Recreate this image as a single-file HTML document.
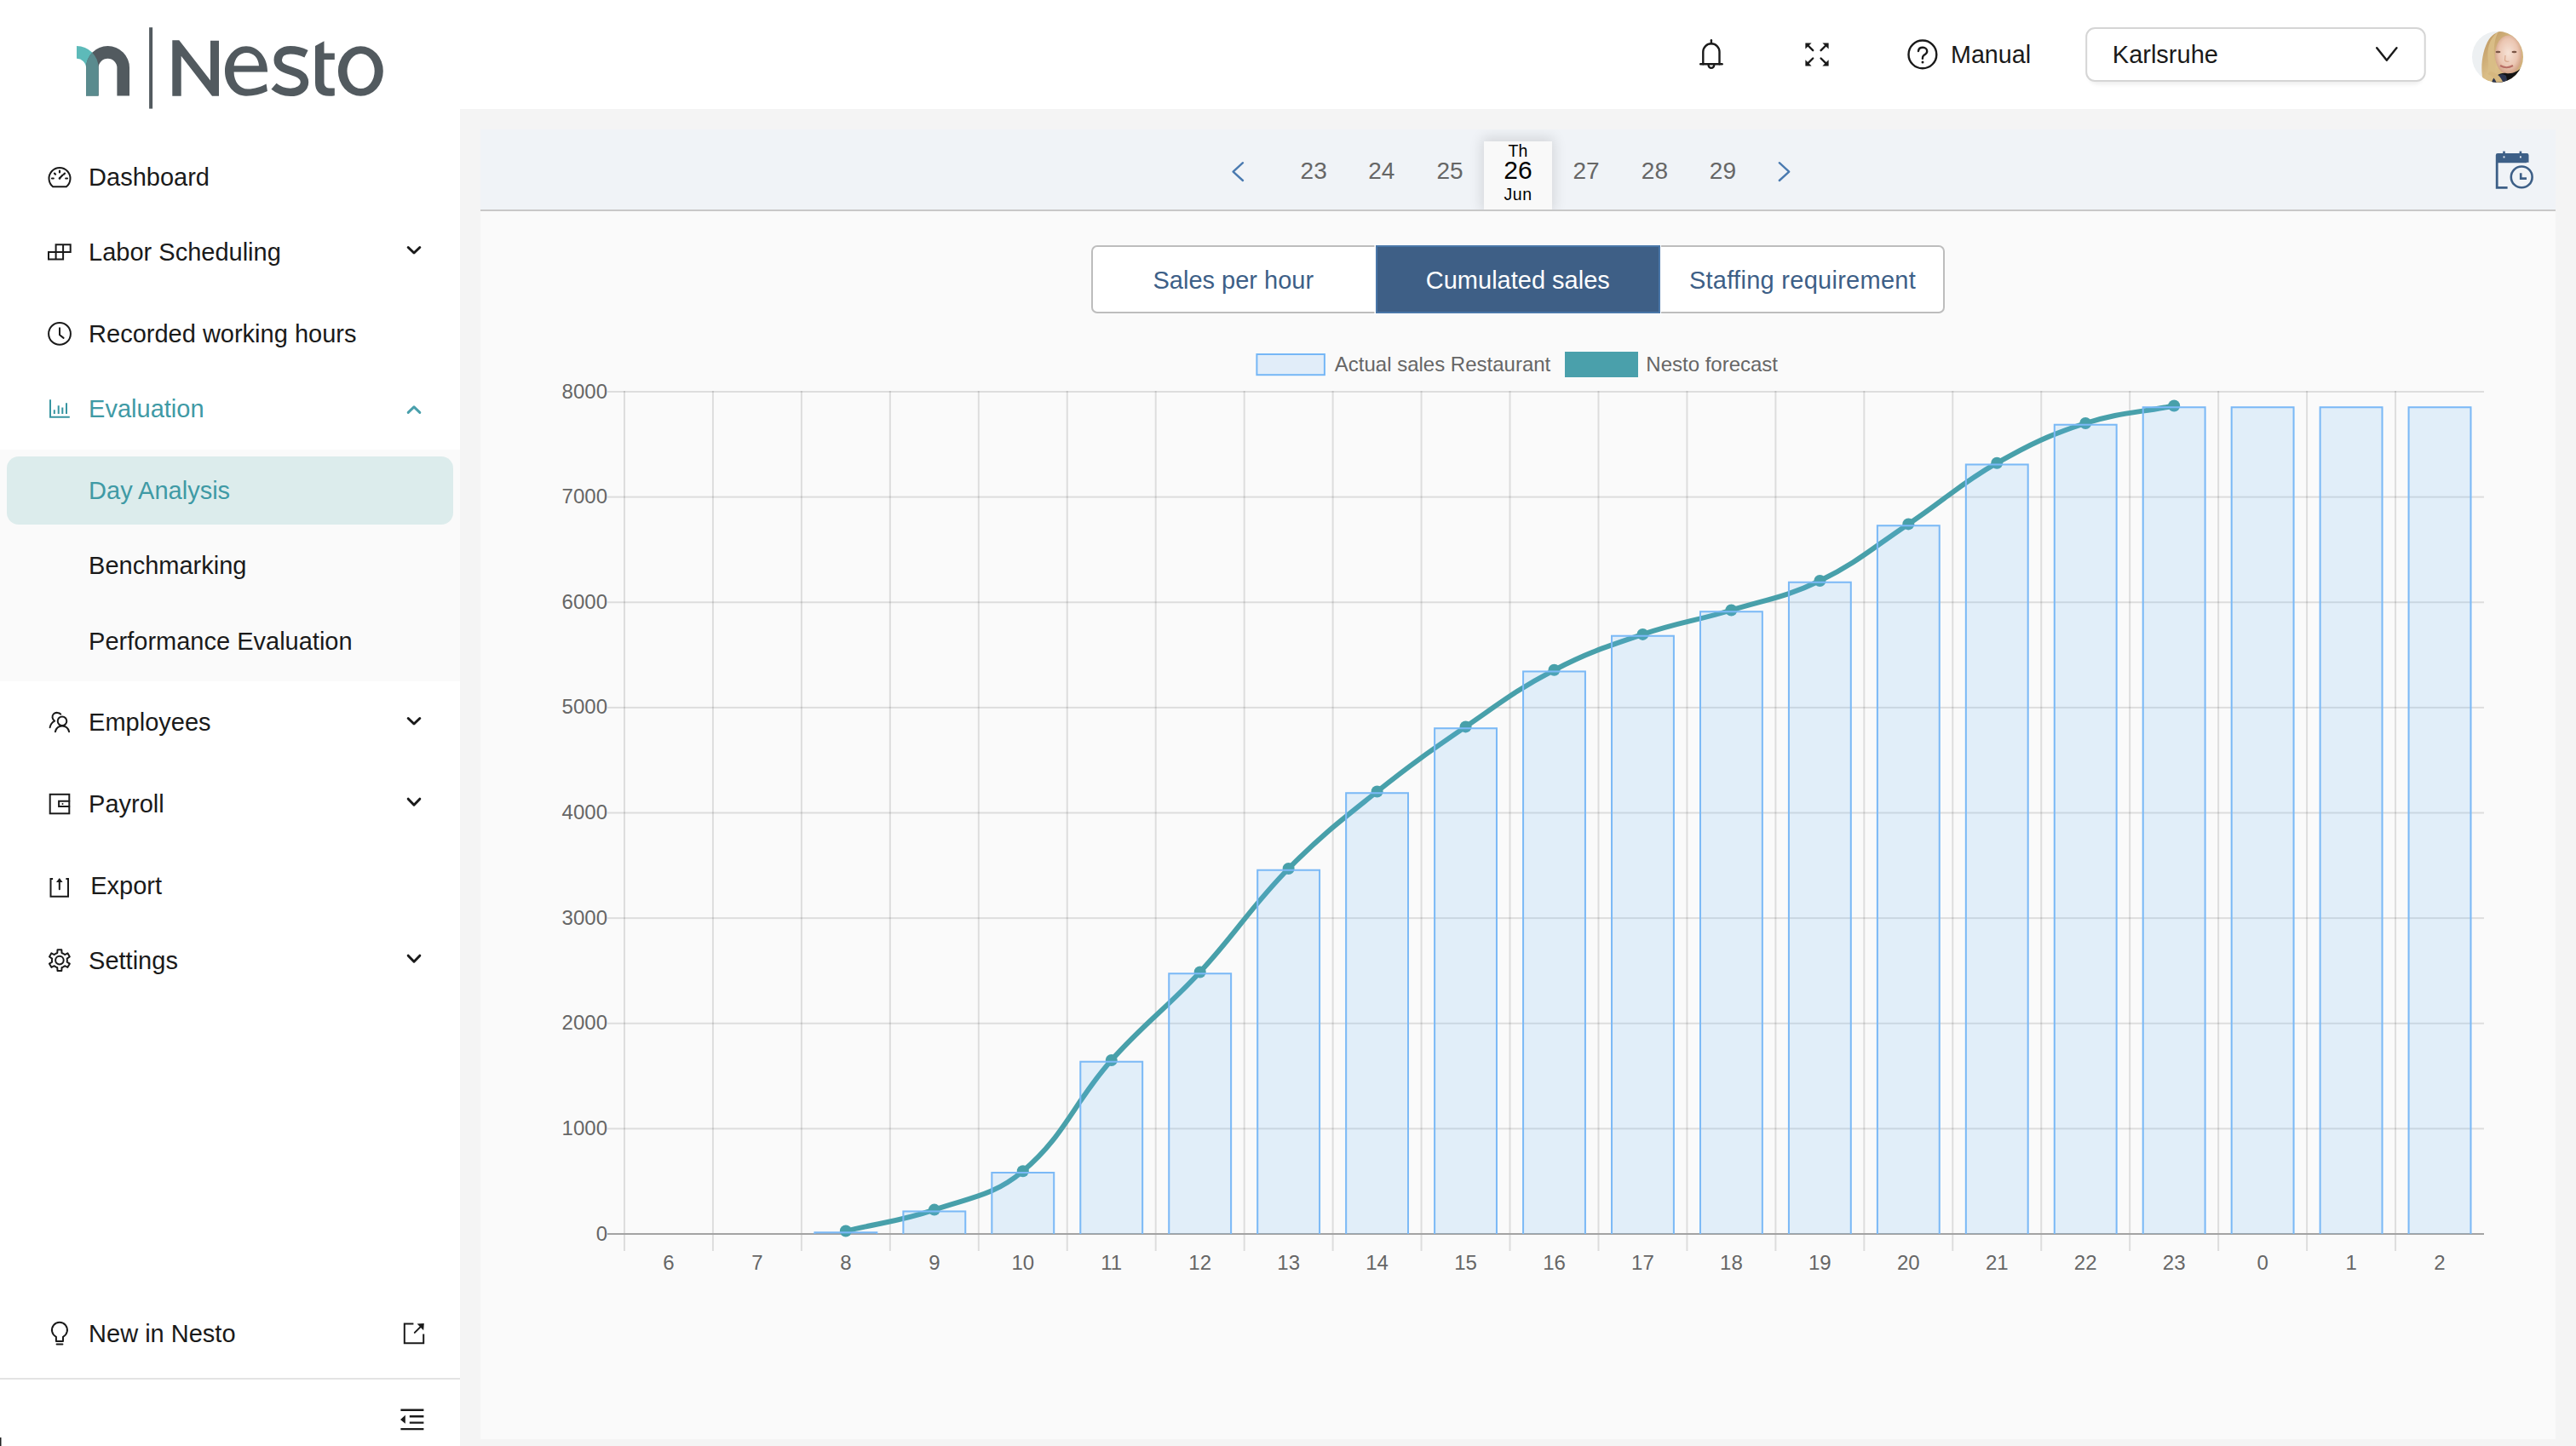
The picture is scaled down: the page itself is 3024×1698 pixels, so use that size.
<!DOCTYPE html>
<html><head><meta charset="utf-8"><title>Nesto - Day Analysis</title>
<style>html,body{margin:0;padding:0;background:#fff;overflow:hidden;width:3024px;height:1698px}
svg{display:block;font-family:"Liberation Sans", sans-serif}</style></head>
<body><svg width="3024" height="1698" viewBox="0 0 3024 1698">
<rect width="3024" height="1698" fill="#ffffff"/>
<rect x="540" y="128" width="2484" height="1570" fill="#f4f4f4"/>
<rect x="564" y="152" width="2436" height="1538" fill="#fafafa"/>
<defs><clipPath id="tealclip"><path d="M90,54 A25.6,25.6 0 0 1 115.6,79.6 L115.6,112.6 L101,112.6 L101,79.6 A10.8,10.8 0 0 0 90,68.8 Z"/></clipPath></defs>
<path d="M90,54 A25.6,25.6 0 0 1 115.6,79.6 L115.6,112.6 L101,112.6 L101,79.6 A10.8,10.8 0 0 0 90,68.8 Z" fill="#5dbab9"/>
<path d="M101,112.6 L101,79.6 A25.5,25.5 0 0 1 152,79.6 L152,112.6 L137.4,112.6 L137.4,79.6 A10.9,10.9 0 0 0 115.6,79.6 L115.6,112.6 Z" fill="#525a5f"/>
<path d="M101,112.6 L101,79.6 A25.5,25.5 0 0 1 152,79.6 L152,112.6 L137.4,112.6 L137.4,79.6 A10.9,10.9 0 0 0 115.6,79.6 L115.6,112.6 Z" fill="#5a8b8e" clip-path="url(#tealclip)"/>
<rect x="175.1" y="32.2" width="4" height="95.4" fill="#525a5f"/>
<path fill="#525a5f" d="M202.3,112.7 L202.3,47.3 L210.3,47.3 L247,94.6 L247,47.7 L257,47.7 L257,112.7 L249,112.7 L212.7,65.8 L212.7,112.7 Z"/>
<path fill="#525a5f" fill-rule="evenodd" d="M313.9,107.1 C306,111 298,112.7 289,112.7 C275.2,112.7 264,99.6 264,83.5 C264,67.4 275.2,54.3 289,54.3 C302.8,54.3 314,67.4 314,83.5 L314,84.4 L274.6,84.4 C274.6,96 281.5,104.5 291,104.5 C299,104.5 306,102 312.6,98.5 Z M274.7,77.3 C275.5,68.5 281,62 289.5,62 C298,62 303.5,68.5 304,77.3 Z"/>
<path fill="none" stroke="#525a5f" stroke-width="9.4" d="M359.5,63.2 C353,60 347,58.7 341,58.7 C332,58.7 326.2,63.5 326.2,70.5 C326.2,78 333,80.5 341,83 C350,85.8 357.5,88.5 357.5,96.5 C357.5,104 350,108.4 341,108.4 C334,108.4 327,106 321.5,101.3"/>
<path fill="#525a5f" d="M370,54.1 L380.5,48.3 L380.5,62.4 L392.8,62.4 L392.8,70 L380.5,70 L380.5,96 C380.5,101.5 383,103.6 388,103.6 L392.8,103.6 L392.8,112.2 C391,112.6 389,112.7 386.5,112.7 C375,112.7 370,107 370,97 Z"/>
<path fill="#525a5f" fill-rule="evenodd" d="M396.9,83.5 A26.45,29.2 0 1 1 449.8,83.5 A26.45,29.2 0 1 1 396.9,83.5 Z M407.5,83.5 A16.1,20.5 0 1 0 439.7,83.5 A16.1,20.5 0 1 0 407.5,83.5 Z"/>
<rect x="0" y="528" width="540" height="272" fill="#fafafa"/>
<rect x="8" y="536" width="524" height="80" rx="14" fill="#dcecec"/>
<rect x="0" y="1618" width="540" height="2" fill="#e3e3e3"/>
<text x="104.1" y="218" font-size="29" fill="#1a1a1a" text-anchor="start" font-weight="normal">Dashboard</text>
<text x="104.1" y="306" font-size="29" fill="#1a1a1a" text-anchor="start" font-weight="normal">Labor Scheduling</text>
<text x="104.1" y="402" font-size="29" fill="#1a1a1a" text-anchor="start" font-weight="normal">Recorded working hours</text>
<text x="104.1" y="490" font-size="29" fill="#3f9aa5" text-anchor="start" font-weight="normal">Evaluation</text>
<text x="104.1" y="586" font-size="29" fill="#3f9aa5" text-anchor="start" font-weight="normal">Day Analysis</text>
<text x="104.1" y="674" font-size="29" fill="#1a1a1a" text-anchor="start" font-weight="normal">Benchmarking</text>
<text x="104.1" y="763" font-size="29" fill="#1a1a1a" text-anchor="start" font-weight="normal">Performance Evaluation</text>
<text x="104.1" y="858" font-size="29" fill="#1a1a1a" text-anchor="start" font-weight="normal">Employees</text>
<text x="104.1" y="954" font-size="29" fill="#1a1a1a" text-anchor="start" font-weight="normal">Payroll</text>
<text x="106.2" y="1050" font-size="29" fill="#1a1a1a" text-anchor="start" font-weight="normal">Export</text>
<text x="104.1" y="1138" font-size="29" fill="#1a1a1a" text-anchor="start" font-weight="normal">Settings</text>
<text x="104.1" y="1576" font-size="29" fill="#1a1a1a" text-anchor="start" font-weight="normal">New in Nesto</text>
<path d="M479.2,290.5 L486,297 L492.8,290.5" fill="none" stroke="#1a1a1a" stroke-width="3" stroke-linecap="round" stroke-linejoin="round"/>
<path d="M479.2,843.5 L486,850 L492.8,843.5" fill="none" stroke="#1a1a1a" stroke-width="3" stroke-linecap="round" stroke-linejoin="round"/>
<path d="M479.2,938.2 L486,945.2 L492.8,938.2" fill="none" stroke="#1a1a1a" stroke-width="3" stroke-linecap="round" stroke-linejoin="round"/>
<path d="M479.2,1122.2 L486,1129.2 L492.8,1122.2" fill="none" stroke="#1a1a1a" stroke-width="3" stroke-linecap="round" stroke-linejoin="round"/>
<path d="M479.2,484.4 L486,477.8 L492.8,484.4" fill="none" stroke="#4aa0ac" stroke-width="3" stroke-linecap="round" stroke-linejoin="round"/>
<g fill="none" stroke="#1a1a1a" stroke-width="2" stroke-linecap="round" stroke-linejoin="round">
<path d="M62.1,219.2 A12.5,12.5 0 1 1 77.9,219.2 Z"/>
<path d="M70,200.6 V202.4 M64,203.6 L65.1,204.7 M76,203.6 L74.9,204.7 M61,209.5 H62.8 M79,209.5 H77.2 M70,209.3 L73.6,205.6" stroke-width="2.2"/>
<circle cx="70" cy="209.5" r="1.3" fill="#1a1a1a" stroke="none"/>
<path d="M65.6,295.9 V287.3 H82.7 V295.9 H57 V304.4 H74.1 V287.3 M65.6,295.9 V304.4" stroke-linecap="square" stroke-linejoin="miter"/>
<circle cx="70" cy="391.9" r="12.9"/>
<path d="M70,385.3 V393.3 L74.6,396.9"/>
</g>
<path d="M59,469.2 V489.8 H81.8" fill="none" stroke="#3795a1" stroke-width="2" stroke-linecap="butt" stroke-linejoin="miter"/><path d="M63.8,481.2 V485.9 M68.7,476.2 V485.9 M73.3,478.4 V485.9 M78,473.3 V485.9" fill="none" stroke="#3795a1" stroke-width="2" stroke-linecap="butt"/>
<g fill="none" stroke="#1a1a1a" stroke-width="2" stroke-linecap="round" stroke-linejoin="round">
<circle cx="73" cy="846.8" r="5.3"/>
<path d="M64.9,859.2 C65.8,855.2 69,852.4 73,852.4 C77,852.4 80.2,855.2 81.1,859.2"/>
<path d="M71.2,838.6 C69.6,836.6 65.2,836.1 62.9,838.4 C60.6,840.8 61.2,844.8 64.1,846.6 C61.2,848.1 59.2,850.8 58.6,854.2"/>
<rect x="58.7" y="932.8" width="22.6" height="22.5" stroke-linejoin="miter"/>
<path d="M81.3,940.8 H69.1 V946.9 H81.3" stroke-linejoin="miter"/>
<circle cx="73.5" cy="944" r="1" fill="#1a1a1a" stroke="none"/>
<path d="M62.1,1032 H59.5 V1052.8 H80 V1032 H77.4" stroke-linejoin="miter" stroke-linecap="butt"/>
<path d="M69.8,1044.2 V1034.5"/>
<path d="M69.8,1031 L66,1036 H73.6 Z" fill="#1a1a1a" stroke="none"/>
</g>
<path d="M65.40,1119.81 L67.27,1118.99 L67.50,1115.23 L72.30,1115.23 L72.53,1118.99 L74.40,1119.81 L76.04,1121.02 L79.41,1119.33 L81.81,1123.50 L78.67,1125.58 L78.90,1127.60 L78.67,1129.62 L81.81,1131.70 L79.41,1135.87 L76.04,1134.18 L74.40,1135.39 L72.53,1136.21 L72.30,1139.97 L67.50,1139.97 L67.27,1136.21 L65.40,1135.39 L63.76,1134.18 L60.39,1135.87 L57.99,1131.70 L61.13,1129.62 L60.90,1127.60 L61.13,1125.58 L57.99,1123.50 L60.39,1119.33 L63.76,1121.02 Z" fill="none" stroke="#1a1a1a" stroke-width="2" stroke-linejoin="round"/>
<circle cx="69.9" cy="1127.6" r="4.8" fill="none" stroke="#1a1a1a" stroke-width="2"/>
<g fill="none" stroke="#1a1a1a" stroke-width="2" stroke-linecap="round" stroke-linejoin="round">
<path d="M65.9,1569.8 A9,9 0 1 1 74,1569.8 V1574.9 H65.9 Z"/>
<path d="M66.6,1578.6 H73.4"/>
<path d="M485.4,1554.6 H474.8 V1577.2 H497.2 V1566.6" stroke-linejoin="miter" stroke-linecap="butt"/>
<path d="M486.8,1564.9 L494.6,1557.1"/>
<path d="M497.8,1554 L489.6,1554.6 L497.2,1562.2 Z" fill="#1a1a1a" stroke="none"/>
<path d="M470.4,1655.7 H497.4 M480.8,1663.2 H497.4 M480.8,1670.6 H497.4 M470.4,1678.1 H497.4" stroke-width="2.4" stroke-linecap="butt"/>
<path d="M475.8,1661.8 L470,1666.9 L475.8,1671.8 Z" fill="#1a1a1a" stroke="none"/>
</g>
<g fill="none" stroke="#1a1a1a" stroke-width="2.4" stroke-linecap="round" stroke-linejoin="round">
<path d="M1999.3,75.3 V60.8 A9.6,9.6 0 0 1 2018.5,60.8 V75.3"/>
<path d="M1996.2,75.3 H2021.6"/>
<path d="M2008.9,47.2 V51"/>
<path d="M2005.6,76.6 A3.3,3.3 0 0 0 2012.2,76.6"/>
<path d="M2128.2,59.2 L2122,53 M2137.6,59.2 L2143.8,53 M2128.2,68.5 L2122,74.7 M2137.6,68.5 L2143.8,74.7"/>
</g>
<g fill="#1a1a1a">
<path d="M2119.4,50.4 L2126.6,50.4 L2119.4,57.6 Z"/>
<path d="M2146.6,50.4 L2139.4,50.4 L2146.6,57.6 Z"/>
<path d="M2119.4,77.5 L2119.4,70.3 L2126.6,77.5 Z"/>
<path d="M2146.6,77.5 L2146.6,70.3 L2139.4,77.5 Z"/>
</g>
<g fill="none" stroke="#1a1a1a" stroke-width="2.4" stroke-linecap="round" stroke-linejoin="round">
<circle cx="2256.9" cy="63.9" r="16.4"/>
<path d="M2252,60 C2252.2,57.4 2254.5,55.8 2257.3,55.8 C2260.1,55.8 2262.2,57.7 2262.2,60.2 C2262.2,62.9 2259.7,64 2258.2,65.1 C2257.1,66 2256.9,67 2256.9,68.8"/>
</g>
<circle cx="2257" cy="72.9" r="1.5" fill="#1a1a1a"/>
<text x="2290" y="74" font-size="28.7" fill="#1a1a1a" text-anchor="start" font-weight="normal">Manual</text>
<defs><filter id="selsh" x="-5%" y="-30%" width="110%" height="160%"><feGaussianBlur stdDeviation="2.5"/></filter></defs><rect x="2452" y="37" width="392" height="62" rx="10" fill="#000" opacity="0.07" filter="url(#selsh)"/>
<rect x="2449.2" y="33.1" width="397.5" height="61.8" rx="10" fill="#fff" stroke="#d5d5d5" stroke-width="2"/>
<text x="2479.8" y="74" font-size="29" fill="#1a1a1a" text-anchor="start" font-weight="normal">Karlsruhe</text>
<path d="M2790.2,56.2 L2801.8,70.8 L2813.4,56.2" fill="none" stroke="#1a1a1a" stroke-width="2.4" stroke-linecap="round" stroke-linejoin="round"/>
<defs><clipPath id="av"><circle cx="2932" cy="66.8" r="30"/></clipPath>
<radialGradient id="face" cx="0.5" cy="0.45" r="0.55"><stop offset="0" stop-color="#f6e2d6"/><stop offset="0.65" stop-color="#ebc6b2"/><stop offset="1" stop-color="#cf9f82"/></radialGradient>
<linearGradient id="hair" x1="0" y1="0" x2="1" y2="1"><stop offset="0" stop-color="#b8905a"/><stop offset="0.5" stop-color="#dcc08a"/><stop offset="1" stop-color="#c9a46e"/></linearGradient></defs>
<g clip-path="url(#av)">
<rect x="2900" y="35" width="64" height="64" fill="#edf0f2"/>
<path d="M2916,99 C2911,84 2913,60 2922,46 C2931,33 2950,33 2960,44 C2967,54 2965,76 2963,99 Z" fill="url(#hair)"/>
<path d="M2950,99 C2956,92 2962,82 2964,70 L2964,99 Z" fill="#121212"/>
<ellipse cx="2944.5" cy="64.5" rx="15.5" ry="23" fill="url(#face)"/>
<path d="M2924,99 C2927,90 2934,85 2942,86 C2950,87 2955,84 2962,78 L2964,99 Z" fill="#141414"/>
<path d="M2927,92 C2932,87 2938,86 2942,89 L2944,99 L2925,99 Z" fill="#2d3650"/>
<path d="M2933,37 C2927,48 2927,62 2929,75 C2931,84 2927,92 2921,99 L2915,99 C2920,90 2922,82 2921,72 C2919,58 2922,45 2933,37 Z" fill="#d9bd86"/>
<path d="M2923,84 C2931,85 2937,91 2939,99 L2931,99 C2930,93 2926,89 2920,87 Z" fill="#d6b77f"/>
<ellipse cx="2932.5" cy="61" rx="3" ry="1.3" fill="#7a5646"/><ellipse cx="2951.5" cy="61" rx="3" ry="1.3" fill="#7a5646"/>
<path d="M2935,77 Q2942.5,81.5 2950,77" stroke="#b86f66" stroke-width="2.2" fill="none"/>
<path d="M2941,65 L2940.5,71 Q2942.5,73 2945.5,72" stroke="#d9a88e" stroke-width="1.2" fill="none"/>
</g>
<rect x="564" y="152" width="2436" height="94" fill="#f0f3f7"/>
<rect x="564" y="246" width="2436" height="2" fill="#c8c8c8"/>
<defs><filter id="sh" x="-30%" y="-30%" width="160%" height="160%"><feGaussianBlur stdDeviation="8"/></filter><clipPath id="dbclip"><rect x="564" y="152" width="2436" height="94"/></clipPath></defs>
<rect x="1740" y="162" width="84" height="86" fill="#000" opacity="0.12" filter="url(#sh)" clip-path="url(#dbclip)"/>
<rect x="1742" y="166" width="80" height="80" fill="#f9f9f9"/>
<rect x="1736" y="246" width="92" height="2" fill="#c8c8c8"/>
<text x="1782" y="183.6" font-size="19.5" fill="#000" text-anchor="middle" font-weight="normal">Th</text>
<text x="1782" y="210.4" font-size="30" fill="#000" text-anchor="middle" font-weight="normal">26</text>
<text x="1782" y="234.8" font-size="19.5" fill="#000" text-anchor="middle" font-weight="normal" letter-spacing="0.6">Jun</text>
<text x="1542.2" y="210" font-size="28" fill="#666" text-anchor="middle" font-weight="normal">23</text>
<text x="1621.8" y="210" font-size="28" fill="#666" text-anchor="middle" font-weight="normal">24</text>
<text x="1702" y="210" font-size="28" fill="#666" text-anchor="middle" font-weight="normal">25</text>
<text x="1862" y="210" font-size="28" fill="#666" text-anchor="middle" font-weight="normal">27</text>
<text x="1942.4" y="210" font-size="28" fill="#666" text-anchor="middle" font-weight="normal">28</text>
<text x="2022.4" y="210" font-size="28" fill="#666" text-anchor="middle" font-weight="normal">29</text>
<path d="M1459,191.2 L1447.6,201.6 L1459,212" fill="none" stroke="#4a7ab0" stroke-width="2.4" stroke-linecap="round" stroke-linejoin="round"/>
<path d="M2088.8,191.2 L2100.2,201.6 L2088.8,212" fill="none" stroke="#4a7ab0" stroke-width="2.4" stroke-linecap="round" stroke-linejoin="round"/>
<g fill="#3d5f87">
<path d="M2929.8,221.7 V182.2 Q2929.8,180 2932,180 H2966.3 Q2968.5,180 2968.5,182.2 V190.8 H2966 V191.3 H2932.6 V218.9 H2943.6 V221.7 Z"/>
<rect x="2938.2" y="177.6" width="2.6" height="8"/><rect x="2957.6" y="177.6" width="2.6" height="8"/>
</g>
<rect x="2938.6" y="183.4" width="1.8" height="2" fill="#f0f3f7"/><rect x="2958" y="183.4" width="1.8" height="2" fill="#f0f3f7"/>
<circle cx="2960.2" cy="207.9" r="12.4" fill="#f0f3f7" stroke="#3d5f87" stroke-width="2.6"/>
<path d="M2959.2,203.2 V209.6 H2966" fill="none" stroke="#3d5f87" stroke-width="2.6"/>
<rect x="1282" y="289" width="1000" height="78" rx="6" fill="#fff" stroke="#bdbdbd" stroke-width="2"/>
<rect x="1613.5" y="287" width="336.5" height="82" fill="#fff"/><rect x="1615" y="288" width="334" height="80" fill="#3e5f86"/><rect x="1616" y="289" width="332" height="78" fill="none" stroke="#4a77a8" stroke-width="2"/>
<text x="1447.8" y="338.6" font-size="29" fill="#3d5f87" text-anchor="middle" font-weight="normal">Sales per hour</text>
<text x="1781.8" y="338.6" font-size="29" fill="#ffffff" text-anchor="middle" font-weight="normal">Cumulated sales</text>
<text x="2116" y="338.6" font-size="29" fill="#3d5f87" text-anchor="middle" font-weight="normal" letter-spacing="0.28">Staffing requirement</text>
<rect x="1475.4" y="416" width="79.5" height="24.2" fill="#e1edf9" stroke="#76b7f6" stroke-width="2"/>
<text x="1566.8" y="436" font-size="24" fill="#666" text-anchor="start" font-weight="normal">Actual sales Restaurant</text>
<rect x="1837" y="413" width="86" height="30" fill="#4aa0ab"/>
<text x="1932.3" y="436" font-size="24" fill="#666" text-anchor="start" font-weight="normal">Nesto forecast</text>
<rect x="713" y="1448.00" width="2203.00" height="2" fill="#a3a3a3"/>
<text x="713" y="1456.6" font-size="24" fill="#666" text-anchor="end" font-weight="normal">0</text>
<rect x="713" y="1324.38" width="2203.00" height="2" fill="rgba(0,0,0,0.115)"/>
<text x="713" y="1332.97" font-size="24" fill="#666" text-anchor="end" font-weight="normal">1000</text>
<rect x="713" y="1200.75" width="2203.00" height="2" fill="rgba(0,0,0,0.115)"/>
<text x="713" y="1209.35" font-size="24" fill="#666" text-anchor="end" font-weight="normal">2000</text>
<rect x="713" y="1077.12" width="2203.00" height="2" fill="rgba(0,0,0,0.115)"/>
<text x="713" y="1085.72" font-size="24" fill="#666" text-anchor="end" font-weight="normal">3000</text>
<rect x="713" y="953.50" width="2203.00" height="2" fill="rgba(0,0,0,0.115)"/>
<text x="713" y="962.1" font-size="24" fill="#666" text-anchor="end" font-weight="normal">4000</text>
<rect x="713" y="829.88" width="2203.00" height="2" fill="rgba(0,0,0,0.115)"/>
<text x="713" y="838.48" font-size="24" fill="#666" text-anchor="end" font-weight="normal">5000</text>
<rect x="713" y="706.25" width="2203.00" height="2" fill="rgba(0,0,0,0.115)"/>
<text x="713" y="714.85" font-size="24" fill="#666" text-anchor="end" font-weight="normal">6000</text>
<rect x="713" y="582.62" width="2203.00" height="2" fill="rgba(0,0,0,0.115)"/>
<text x="713" y="591.23" font-size="24" fill="#666" text-anchor="end" font-weight="normal">7000</text>
<rect x="713" y="459.00" width="2203.00" height="2" fill="rgba(0,0,0,0.115)"/>
<text x="713" y="467.6" font-size="24" fill="#666" text-anchor="end" font-weight="normal">8000</text>
<rect x="732.00" y="459.0" width="2" height="1010.0" fill="rgba(0,0,0,0.115)"/>
<rect x="835.95" y="459.0" width="2" height="1010.0" fill="rgba(0,0,0,0.115)"/>
<rect x="939.90" y="459.0" width="2" height="1010.0" fill="rgba(0,0,0,0.115)"/>
<rect x="1043.86" y="459.0" width="2" height="1010.0" fill="rgba(0,0,0,0.115)"/>
<rect x="1147.81" y="459.0" width="2" height="1010.0" fill="rgba(0,0,0,0.115)"/>
<rect x="1251.76" y="459.0" width="2" height="1010.0" fill="rgba(0,0,0,0.115)"/>
<rect x="1355.71" y="459.0" width="2" height="1010.0" fill="rgba(0,0,0,0.115)"/>
<rect x="1459.67" y="459.0" width="2" height="1010.0" fill="rgba(0,0,0,0.115)"/>
<rect x="1563.62" y="459.0" width="2" height="1010.0" fill="rgba(0,0,0,0.115)"/>
<rect x="1667.57" y="459.0" width="2" height="1010.0" fill="rgba(0,0,0,0.115)"/>
<rect x="1771.52" y="459.0" width="2" height="1010.0" fill="rgba(0,0,0,0.115)"/>
<rect x="1875.48" y="459.0" width="2" height="1010.0" fill="rgba(0,0,0,0.115)"/>
<rect x="1979.43" y="459.0" width="2" height="1010.0" fill="rgba(0,0,0,0.115)"/>
<rect x="2083.38" y="459.0" width="2" height="1010.0" fill="rgba(0,0,0,0.115)"/>
<rect x="2187.33" y="459.0" width="2" height="1010.0" fill="rgba(0,0,0,0.115)"/>
<rect x="2291.29" y="459.0" width="2" height="1010.0" fill="rgba(0,0,0,0.115)"/>
<rect x="2395.24" y="459.0" width="2" height="1010.0" fill="rgba(0,0,0,0.115)"/>
<rect x="2499.19" y="459.0" width="2" height="1010.0" fill="rgba(0,0,0,0.115)"/>
<rect x="2603.14" y="459.0" width="2" height="1010.0" fill="rgba(0,0,0,0.115)"/>
<rect x="2707.10" y="459.0" width="2" height="1010.0" fill="rgba(0,0,0,0.115)"/>
<rect x="2811.05" y="459.0" width="2" height="1010.0" fill="rgba(0,0,0,0.115)"/>
<rect x="713" y="1448.0" width="2203.0" height="2" fill="#a3a3a3"/>
<text x="784.98" y="1491" font-size="24" fill="#666" text-anchor="middle" font-weight="normal">6</text>
<text x="888.93" y="1491" font-size="24" fill="#666" text-anchor="middle" font-weight="normal">7</text>
<text x="992.88" y="1491" font-size="24" fill="#666" text-anchor="middle" font-weight="normal">8</text>
<text x="1096.83" y="1491" font-size="24" fill="#666" text-anchor="middle" font-weight="normal">9</text>
<text x="1200.79" y="1491" font-size="24" fill="#666" text-anchor="middle" font-weight="normal">10</text>
<text x="1304.74" y="1491" font-size="24" fill="#666" text-anchor="middle" font-weight="normal">11</text>
<text x="1408.69" y="1491" font-size="24" fill="#666" text-anchor="middle" font-weight="normal">12</text>
<text x="1512.64" y="1491" font-size="24" fill="#666" text-anchor="middle" font-weight="normal">13</text>
<text x="1616.6" y="1491" font-size="24" fill="#666" text-anchor="middle" font-weight="normal">14</text>
<text x="1720.55" y="1491" font-size="24" fill="#666" text-anchor="middle" font-weight="normal">15</text>
<text x="1824.5" y="1491" font-size="24" fill="#666" text-anchor="middle" font-weight="normal">16</text>
<text x="1928.45" y="1491" font-size="24" fill="#666" text-anchor="middle" font-weight="normal">17</text>
<text x="2032.4" y="1491" font-size="24" fill="#666" text-anchor="middle" font-weight="normal">18</text>
<text x="2136.36" y="1491" font-size="24" fill="#666" text-anchor="middle" font-weight="normal">19</text>
<text x="2240.31" y="1491" font-size="24" fill="#666" text-anchor="middle" font-weight="normal">20</text>
<text x="2344.26" y="1491" font-size="24" fill="#666" text-anchor="middle" font-weight="normal">21</text>
<text x="2448.21" y="1491" font-size="24" fill="#666" text-anchor="middle" font-weight="normal">22</text>
<text x="2552.17" y="1491" font-size="24" fill="#666" text-anchor="middle" font-weight="normal">23</text>
<text x="2656.12" y="1491" font-size="24" fill="#666" text-anchor="middle" font-weight="normal">0</text>
<text x="2760.07" y="1491" font-size="24" fill="#666" text-anchor="middle" font-weight="normal">1</text>
<text x="2864.02" y="1491" font-size="24" fill="#666" text-anchor="middle" font-weight="normal">2</text>
<path d="M992.88,1445.50 C1034.46,1435.54 1056.49,1434.24 1096.83,1420.60 C1139.65,1406.12 1167.10,1403.65 1200.79,1375.20 C1250.26,1333.41 1260.51,1294.71 1304.74,1245.00 C1343.68,1201.23 1368.90,1184.56 1408.69,1141.50 C1452.06,1094.56 1467.98,1065.54 1512.64,1020.00 C1551.14,980.74 1573.61,963.94 1616.60,929.50 C1656.77,897.30 1678.08,882.55 1720.55,853.40 C1761.24,825.47 1780.91,809.55 1824.50,786.80 C1864.07,766.15 1886.05,759.24 1928.45,744.90 C1969.22,731.12 1991.16,728.98 2032.40,716.50 C2074.32,703.82 2097.26,701.01 2136.36,682.00 C2180.42,660.57 2199.20,642.75 2240.31,615.40 C2282.36,587.43 2300.55,568.59 2344.26,543.70 C2383.71,521.23 2405.12,510.93 2448.21,497.00 C2488.28,484.05 2510.59,484.70 2552.17,476.50" fill="none" stroke="#48a0aa" stroke-width="6" stroke-linejoin="round"/>
<circle cx="992.88" cy="1445.50" r="7" fill="#48a0aa"/>
<circle cx="1096.83" cy="1420.60" r="7" fill="#48a0aa"/>
<circle cx="1200.79" cy="1375.20" r="7" fill="#48a0aa"/>
<circle cx="1304.74" cy="1245.00" r="7" fill="#48a0aa"/>
<circle cx="1408.69" cy="1141.50" r="7" fill="#48a0aa"/>
<circle cx="1512.64" cy="1020.00" r="7" fill="#48a0aa"/>
<circle cx="1616.60" cy="929.50" r="7" fill="#48a0aa"/>
<circle cx="1720.55" cy="853.40" r="7" fill="#48a0aa"/>
<circle cx="1824.50" cy="786.80" r="7" fill="#48a0aa"/>
<circle cx="1928.45" cy="744.90" r="7" fill="#48a0aa"/>
<circle cx="2032.40" cy="716.50" r="7" fill="#48a0aa"/>
<circle cx="2136.36" cy="682.00" r="7" fill="#48a0aa"/>
<circle cx="2240.31" cy="615.40" r="7" fill="#48a0aa"/>
<circle cx="2344.26" cy="543.70" r="7" fill="#48a0aa"/>
<circle cx="2448.21" cy="497.00" r="7" fill="#48a0aa"/>
<circle cx="2552.17" cy="476.50" r="7" fill="#48a0aa"/>
<rect x="955.46" y="1446.30" width="74.85" height="2.70" fill="rgba(100,181,246,0.16)"/>
<path d="M956.46,1449.0 V1447.30 H1029.30 V1449.0" fill="none" stroke="#7bb9f6" stroke-width="2"/>
<rect x="1059.41" y="1421.40" width="74.85" height="27.60" fill="rgba(100,181,246,0.16)"/>
<path d="M1060.41,1449.0 V1422.40 H1133.26 V1449.0" fill="none" stroke="#7bb9f6" stroke-width="2"/>
<rect x="1163.36" y="1376.00" width="74.85" height="73.00" fill="rgba(100,181,246,0.16)"/>
<path d="M1164.36,1449.0 V1377.00 H1237.21 V1449.0" fill="none" stroke="#7bb9f6" stroke-width="2"/>
<rect x="1267.32" y="1245.80" width="74.85" height="203.20" fill="rgba(100,181,246,0.16)"/>
<path d="M1268.32,1449.0 V1246.80 H1341.16 V1449.0" fill="none" stroke="#7bb9f6" stroke-width="2"/>
<rect x="1371.27" y="1142.30" width="74.85" height="306.70" fill="rgba(100,181,246,0.16)"/>
<path d="M1372.27,1449.0 V1143.30 H1445.11 V1449.0" fill="none" stroke="#7bb9f6" stroke-width="2"/>
<rect x="1475.22" y="1020.80" width="74.85" height="428.20" fill="rgba(100,181,246,0.16)"/>
<path d="M1476.22,1449.0 V1021.80 H1549.07 V1449.0" fill="none" stroke="#7bb9f6" stroke-width="2"/>
<rect x="1579.17" y="930.30" width="74.85" height="518.70" fill="rgba(100,181,246,0.16)"/>
<path d="M1580.17,1449.0 V931.30 H1653.02 V1449.0" fill="none" stroke="#7bb9f6" stroke-width="2"/>
<rect x="1683.12" y="854.20" width="74.85" height="594.80" fill="rgba(100,181,246,0.16)"/>
<path d="M1684.12,1449.0 V855.20 H1756.97 V1449.0" fill="none" stroke="#7bb9f6" stroke-width="2"/>
<rect x="1787.08" y="787.60" width="74.85" height="661.40" fill="rgba(100,181,246,0.16)"/>
<path d="M1788.08,1449.0 V788.60 H1860.92 V1449.0" fill="none" stroke="#7bb9f6" stroke-width="2"/>
<rect x="1891.03" y="745.70" width="74.85" height="703.30" fill="rgba(100,181,246,0.16)"/>
<path d="M1892.03,1449.0 V746.70 H1964.88 V1449.0" fill="none" stroke="#7bb9f6" stroke-width="2"/>
<rect x="1994.98" y="717.30" width="74.85" height="731.70" fill="rgba(100,181,246,0.16)"/>
<path d="M1995.98,1449.0 V718.30 H2068.83 V1449.0" fill="none" stroke="#7bb9f6" stroke-width="2"/>
<rect x="2098.93" y="682.80" width="74.85" height="766.20" fill="rgba(100,181,246,0.16)"/>
<path d="M2099.93,1449.0 V683.80 H2172.78 V1449.0" fill="none" stroke="#7bb9f6" stroke-width="2"/>
<rect x="2202.89" y="616.20" width="74.85" height="832.80" fill="rgba(100,181,246,0.16)"/>
<path d="M2203.89,1449.0 V617.20 H2276.73 V1449.0" fill="none" stroke="#7bb9f6" stroke-width="2"/>
<rect x="2306.84" y="544.50" width="74.85" height="904.50" fill="rgba(100,181,246,0.16)"/>
<path d="M2307.84,1449.0 V545.50 H2380.68 V1449.0" fill="none" stroke="#7bb9f6" stroke-width="2"/>
<rect x="2410.79" y="497.80" width="74.85" height="951.20" fill="rgba(100,181,246,0.16)"/>
<path d="M2411.79,1449.0 V498.80 H2484.64 V1449.0" fill="none" stroke="#7bb9f6" stroke-width="2"/>
<rect x="2514.74" y="477.30" width="74.85" height="971.70" fill="rgba(100,181,246,0.16)"/>
<path d="M2515.74,1449.0 V478.30 H2588.59 V1449.0" fill="none" stroke="#7bb9f6" stroke-width="2"/>
<rect x="2618.70" y="477.30" width="74.85" height="971.70" fill="rgba(100,181,246,0.16)"/>
<path d="M2619.70,1449.0 V478.30 H2692.54 V1449.0" fill="none" stroke="#7bb9f6" stroke-width="2"/>
<rect x="2722.65" y="477.30" width="74.85" height="971.70" fill="rgba(100,181,246,0.16)"/>
<path d="M2723.65,1449.0 V478.30 H2796.49 V1449.0" fill="none" stroke="#7bb9f6" stroke-width="2"/>
<rect x="2826.60" y="477.30" width="74.85" height="971.70" fill="rgba(100,181,246,0.16)"/>
<path d="M2827.60,1449.0 V478.30 H2900.45 V1449.0" fill="none" stroke="#7bb9f6" stroke-width="2"/>
<rect id="corner" x="0" y="1688" width="1.5" height="10" fill="#222"/>
</svg></body></html>
